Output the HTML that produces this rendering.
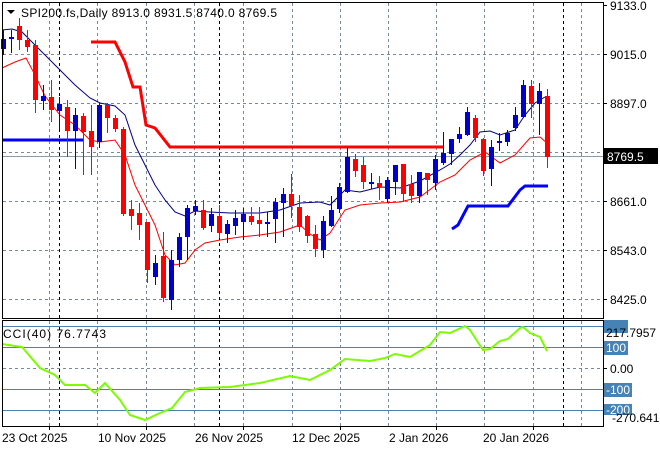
<!DOCTYPE html>
<html><head><meta charset="utf-8"><style>
body{margin:0;background:#fff;width:660px;height:450px;overflow:hidden}
svg{display:block}
text{font-family:"Liberation Sans",sans-serif;font-size:12px;fill:#000}
</style></head><body>
<svg width="660" height="450" xmlns="http://www.w3.org/2000/svg">
<g stroke="#778899" stroke-width="1" stroke-dasharray="3,3" fill="none">
<path d="M49.5 3V318M97.5 3V318M146.5 3V318M194.5 3V318M243.5 3V318M292.5 3V318M340.5 3V318M388.5 3V318M436.5 3V318M484.5 3V318M533.5 3V318M581.5 3V318"/>
<path d="M49.5 321V426M97.5 321V426M146.5 321V426M194.5 321V426M243.5 321V426M292.5 321V426M340.5 321V426M388.5 321V426M436.5 321V426M484.5 321V426M533.5 321V426M581.5 321V426"/>
<path d="M3 54.5H603M3 103.5H603M3 152.5H603M3 201.5H603M3 250.5H603M3 299.5H603M3 368.5H603"/>
</g>
<g stroke="#000" stroke-dasharray="3,3"><path d="M59.5 3V426M219.5 3V426M563.5 3V426"/></g>
<g stroke="#4f7fae"><path d="M3 326.5H603M3 347.5H603M3 389.5H603M3 410.5H603"/></g>
<path d="M3 156.5H603" stroke="#8a9aa8"/>
<polyline fill="none" stroke="#000080" stroke-width="1" points="2,30 12,29 22,32 35,45 45,55 60,70 75,85 90,98 100,103 115,106 125,115 135,145 145,165 155,185 165,200 175,212 185,216 195,211 210,212 230,213 260,213 280,210 300,203 320,202 330,205 345,190 360,192 380,187 400,188 420,181 440,170 450,164 460,155 470,145 480,132 490,131 500,135 515,130 525,115 535,103 545,97"/>
<polyline fill="none" stroke="#ff0000" stroke-width="1" points="2,68 15,62 26,58 35,75 45,96 60,115 75,125 90,140 100,142 115,140 125,155 135,185 145,205 155,225 165,255 175,265 185,263 195,250 205,243 220,240 240,237 260,235 280,232 300,225 310,234 320,240 330,233 345,210 360,205 380,203 400,202 420,197 440,182 455,175 470,160 485,152 500,163 515,155 530,138 540,137 547,143"/>
<polyline fill="none" stroke="#ff0000" stroke-width="3" points="91,42 115,42 125,62 133,87 140,87 146,125 155,128 170,147 443,147"/>
<polyline fill="none" stroke="#0000ff" stroke-width="3" points="2,140 83,140"/>
<polyline fill="none" stroke="#0000ff" stroke-width="3" points="452,229 458,225 468,206 508,206 520,190 525,186 548,186"/>
<path stroke="#ff0000" d="M19.5 18V50M27.5 30V52M35.5 40V113M51.5 80V122M67.5 100V157M83.5 113V175M91.5 105V175M107.5 103V133M115.5 115V132M123.5 127V216M131.5 200V230M139.5 203V240M147.5 222V283M163.5 232V302M203.5 200V230M219.5 205V238M251.5 207V225M259.5 207V237M291.5 174V218M299.5 195V232M307.5 215V243M315.5 225V257M355.5 154V177M363.5 157V189M379.5 176V200M403.5 164V202M411.5 175V203M427.5 173V195M475.5 115V142M483.5 138V176M531.5 80V118M547.5 89V168"/>
<path stroke="#0000cd" d="M3.5 30V55M11.5 30V53M43.5 85V110M59.5 97V130M75.5 108V169M99.5 103V148M155.5 255V285M171.5 250V310M179.5 233V267M187.5 205V260M195.5 200V215M211.5 208V232M227.5 220V243M235.5 210V235M243.5 208V240M267.5 212V237M275.5 198V243M283.5 188V237M323.5 216V258M331.5 196V227M339.5 183V213M347.5 147V193M371.5 173V189M387.5 177V203M395.5 165V195M419.5 172V203M435.5 155V190M443.5 132V165M451.5 139V165M459.5 127V143M467.5 107V136M491.5 140V186M499.5 133V151M507.5 130V146M515.5 107V131M523.5 80V118M539.5 83V135"/>
<g fill="#ff0000">
<rect x="17" y="26" width="5" height="14"/><rect x="25" y="40" width="5" height="7"/><rect x="33" y="45" width="5" height="55"/><rect x="49" y="97" width="5" height="13"/><rect x="65" y="107" width="5" height="24"/><rect x="81" y="116" width="5" height="16"/><rect x="89" y="131" width="5" height="16"/><rect x="105" y="105" width="5" height="13"/><rect x="113" y="118" width="5" height="11"/><rect x="121" y="129" width="5" height="85"/><rect x="129" y="209" width="5" height="7"/><rect x="137" y="213" width="5" height="12"/><rect x="145" y="222" width="5" height="48"/><rect x="161" y="256" width="5" height="42"/><rect x="201" y="210" width="5" height="18"/><rect x="217" y="216" width="5" height="17"/><rect x="249" y="216" width="5" height="6"/><rect x="257" y="220" width="5" height="4"/><rect x="289" y="194" width="5" height="12"/><rect x="297" y="207" width="5" height="20"/><rect x="305" y="216" width="5" height="20"/><rect x="313" y="234" width="5" height="15"/><rect x="353" y="159" width="5" height="12"/><rect x="361" y="165" width="5" height="17"/><rect x="377" y="183" width="5" height="4"/><rect x="401" y="164" width="5" height="30"/><rect x="409" y="184" width="5" height="12"/><rect x="425" y="173" width="5" height="7"/><rect x="473" y="118" width="5" height="20"/><rect x="481" y="139" width="5" height="32"/><rect x="529" y="86" width="5" height="18"/><rect x="545" y="96" width="5" height="61"/>
</g>
<g fill="#0000cd">
<rect x="1" y="39" width="5" height="10"/><rect x="9" y="37" width="5" height="2"/><rect x="41" y="96" width="5" height="5"/><rect x="57" y="104" width="5" height="7"/><rect x="73" y="115" width="5" height="16"/><rect x="97" y="105" width="5" height="37"/><rect x="153" y="263" width="5" height="14"/><rect x="169" y="260" width="5" height="40"/><rect x="177" y="237" width="5" height="23"/><rect x="185" y="208" width="5" height="29"/><rect x="193" y="206" width="5" height="5"/><rect x="209" y="214" width="5" height="12"/><rect x="225" y="224" width="5" height="10"/><rect x="233" y="218" width="5" height="8"/><rect x="241" y="214" width="5" height="8"/><rect x="265" y="222" width="5" height="2"/><rect x="273" y="202" width="5" height="17"/><rect x="281" y="194" width="5" height="9"/><rect x="321" y="221" width="5" height="29"/><rect x="329" y="210" width="5" height="16"/><rect x="337" y="187" width="5" height="22"/><rect x="345" y="157" width="5" height="35"/><rect x="369" y="182" width="5" height="2"/><rect x="385" y="180" width="5" height="19"/><rect x="393" y="165" width="5" height="17"/><rect x="417" y="172" width="5" height="24"/><rect x="433" y="159" width="5" height="24"/><rect x="441" y="153" width="5" height="10"/><rect x="449" y="139" width="5" height="15"/><rect x="457" y="134" width="5" height="5"/><rect x="465" y="112" width="5" height="23"/><rect x="489" y="147" width="5" height="22"/><rect x="497" y="141" width="5" height="2"/><rect x="505" y="133" width="5" height="9"/><rect x="513" y="115" width="5" height="13"/><rect x="521" y="85" width="5" height="32"/><rect x="537" y="91" width="5" height="13"/>
</g>
<polyline fill="none" stroke="#7cfc00" stroke-width="2" points="2,344 22,347 40,368 55,375 65,385 85,385 95,393 105,383 120,400 130,415 145,420 160,413 172,408 185,392 200,388 230,387 260,383 290,376 310,380 330,370 345,359 370,361 385,358 395,354 410,357 430,345 440,332 450,333 465,326 470,330 483,350 490,349 500,341 508,339 520,328 523,327 530,333 540,337 547,351"/>
<rect x="2.5" y="2.5" width="601" height="316" fill="none" stroke="#000"/>
<rect x="2.5" y="320.5" width="601" height="106" fill="none" stroke="#000"/>
<g stroke="#000"><path d="M603 5.5h4M603 54.5h4M603 103.5h4M603 201.5h4M603 250.5h4M603 299.5h4M603 347.5h4M603 368.5h4M603 389.5h4M603 410.5h4M49.5 426v4M146.5 426v4M243.5 426v4M340.5 426v4M436.5 426v4M533.5 426v4"/></g>
<path d="M7 10h8l-4 4z" fill="#000"/>
<text x="21" y="17" textLength="256" lengthAdjust="spacing">SPI200.fs,Daily  8913.0 8931.5 8740.0 8769.5</text>
<text x="3" y="338" textLength="103" lengthAdjust="spacing">CCI(40) 76.7743</text>
<g>
<text x="610" y="10">9133.0</text><text x="610" y="59">9015.0</text><text x="610" y="108">8897.0</text>
<rect x="604" y="148" width="54" height="16" fill="#000"/><text x="607" y="161" style="fill:#fff">8769.5</text>
<text x="610" y="206">8661.0</text><text x="610" y="255">8543.0</text><text x="610" y="304">8425.0</text>
<rect x="604" y="320" width="24" height="13" fill="#4682b4"/><text x="606" y="337">217.7957</text>
<rect x="604" y="341" width="24" height="14" fill="#4682b4"/><text x="606" y="352" style="fill:#fff">100</text>
<text x="610" y="373">0.00</text>
<rect x="604" y="383" width="28" height="14" fill="#4682b4"/><text x="606" y="394" style="fill:#fff">-100</text>
<rect x="604" y="404" width="28" height="11" fill="#4682b4"/><text x="606" y="414" style="fill:#fff">-200</text>
<text x="612" y="422">-270.6415</text>
</g>
<g>
<text x="2" y="442">23 Oct 2025</text><text x="98" y="442">10 Nov 2025</text><text x="195" y="442">26 Nov 2025</text><text x="292" y="442">12 Dec 2025</text><text x="389" y="442">2 Jan 2026</text><text x="483" y="442">20 Jan 2026</text>
</g>
</svg>
</body></html>
